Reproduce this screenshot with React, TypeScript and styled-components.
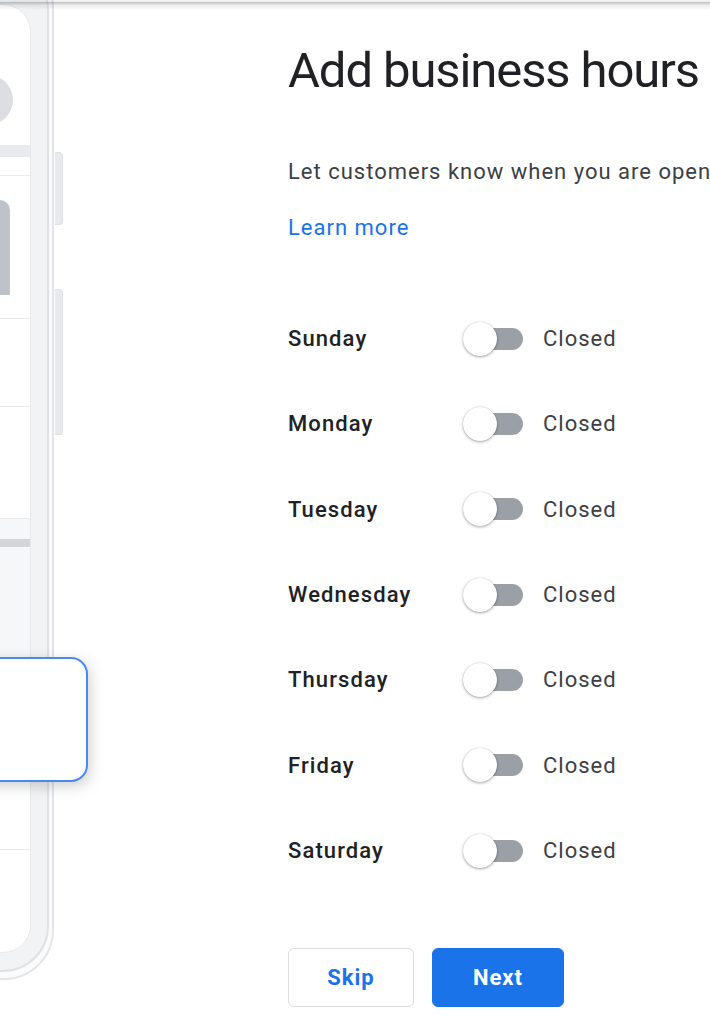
import React from "react";
import styled, { createGlobalStyle } from "styled-components";

const Global = createGlobalStyle`
  html, body { margin: 0; padding: 0; background: #fff; }
  body { font-family: Roboto, "Liberation Sans", Arial, sans-serif; }
  * { box-sizing: border-box; }
`;

const Page = styled.div`
  position: relative;
  display: flex;
  width: 710px;
  height: 1024px;
  overflow: hidden;
  background: #fff;
`;

const TopShadow = styled.div`
  position: absolute;
  left: 0;
  top: 0;
  width: 100%;
  height: 10px;
  background: linear-gradient(
    to bottom,
    rgba(0, 0, 0, 0.05) 0px,
    rgba(0, 0, 0, 0.06) 2px,
    rgba(0, 0, 0, 0.26) 2px,
    rgba(0, 0, 0, 0.2) 3px,
    rgba(0, 0, 0, 0.08) 5px,
    rgba(0, 0, 0, 0) 10px
  );
  z-index: 5;
`;

const PhoneColumn = styled.div`
  position: relative;
  flex: none;
  width: 288px;
  display: flex;
  align-items: flex-start;
`;

const PhoneOuter = styled.div`
  flex: none;
  margin-left: -332px;
  margin-top: -41px;
  border: 2px solid #e3e5e8;
  border-radius: 50px;
  padding: 3px 3px 6px 3px;
  background: #fbfbfc;
`;

const PhoneBezel = styled.div`
  border: 2px solid #dfe1e4;
  border-radius: 46px;
  background: #f1f3f4;
  padding: 38px 16px 17px 16px;
`;

const Screen = styled.div`
  width: 340px;
  height: 949px;
  background: #fff;
  border: 1px solid #e6e8eb;
  border-radius: 28px;
  overflow: hidden;
  display: flex;
  flex-direction: column;
`;

const AvatarRow = styled.div`
  flex: none;
  height: 140px;
  display: flex;
  justify-content: flex-end;
  padding: 70px 17px 0 0;
`;

const Avatar = styled.div`
  width: 50px;
  height: 50px;
  border-radius: 50%;
  background: #dcdee1;
`;

const GrayBar = styled.div<{ $h: number; $c: string }>`
  flex: none;
  height: ${(p) => p.$h}px;
  background: ${(p) => p.$c};
`;

const Section = styled.div<{ $h: number; $bg?: string; $line?: boolean }>`
  flex: none;
  height: ${(p) => p.$h}px;
  background: ${(p) => p.$bg || "#fff"};
  border-bottom: ${(p) => (p.$line ? "1px solid #e8eaed" : "none")};
  display: flex;
  flex-direction: column;
  align-items: flex-end;
`;

const TallBlock = styled.div`
  margin: 24px 20px 0 0;
  width: 60px;
  height: 95px;
  background: #bfc3c8;
  border-radius: 10px 10px 0 0;
`;

const Dot = styled.div`
  margin: 56px 30px 0 0;
  width: 2px;
  height: 2px;
  background: #5f6368;
  border-radius: 50%;
`;

const StripeBar = styled.div`
  margin-top: 20px;
  width: 100%;
  height: 8px;
  background: #d3d5d8;
`;

const SideRail = styled.div`
  flex: none;
  display: flex;
  flex-direction: column;
  gap: 64px;
  padding-top: 152px;
  margin-left: 1px;
`;

const SideButton = styled.div<{ $h: number }>`
  width: 8px;
  height: ${(p) => p.$h}px;
  background: #e8eaed;
  border: 1px solid #dfe1e4;
  border-left: none;
  border-radius: 0 4px 4px 0;
`;

const FloatCard = styled.div`
  position: absolute;
  left: -30px;
  top: 657px;
  width: 118px;
  height: 125px;
  background: #fff;
  border: 2px solid #4a89f0;
  border-radius: 17px;
  box-shadow: 2px 4px 14px rgba(60, 64, 67, 0.25);
  z-index: 2;
`;

const Content = styled.div`
  flex: 1;
  display: flex;
  flex-direction: column;
  padding-top: 40px;
  white-space: nowrap;
`;

const Title = styled.h1`
  margin: 0;
  font-family: Roboto, "Liberation Sans", sans-serif;
  font-weight: 400;
  font-size: 49px;
  line-height: 61px;
  color: #202124;
  letter-spacing: -1.1px;
`;

const Lead = styled.p`
  margin: 57px 0 0 0;
  font-size: 22px;
  line-height: 28px;
  letter-spacing: 1px;
  color: #3c4043;
`;

const LearnMore = styled.a`
  margin-top: 28px;
  font-size: 22px;
  line-height: 28px;
  letter-spacing: 1px;
  color: #1a73e8;
  text-decoration: none;
`;

const Days = styled.div`
  margin-top: 54px;
  display: flex;
  flex-direction: column;
`;

const DayRow = styled.div`
  height: 85.33px;
  display: flex;
  align-items: center;
`;

const DayName = styled.div`
  width: 175px;
  font-size: 22px;
  font-weight: 500;
  letter-spacing: 1.1px;
  color: #202124;
`;

const Track = styled.div`
  position: relative;
  width: 55px;
  height: 22px;
  margin-left: 5px;
  border-radius: 11px;
  background: #9aa0a6;
`;

const Knob = styled.div`
  position: absolute;
  left: -5px;
  top: -6px;
  width: 34px;
  height: 34px;
  border-radius: 50%;
  background: #fff;
  box-shadow: 0 1px 3px rgba(0, 0, 0, 0.35), 0 0 1px rgba(0, 0, 0, 0.2);
`;

const Status = styled.div`
  margin-left: 20px;
  font-size: 22px;
  letter-spacing: 1px;
  color: #3c4043;
`;

const Actions = styled.div`
  margin-top: 55px;
  display: flex;
  gap: 18px;
`;

const Button = styled.button<{ $primary?: boolean }>`
  height: 59px;
  width: ${(p) => (p.$primary ? 132 : 126)}px;
  border-radius: 6px;
  border: 1px solid ${(p) => (p.$primary ? "#1a73e8" : "#dadce0")};
  background: ${(p) => (p.$primary ? "#1a73e8" : "#fff")};
  color: ${(p) => (p.$primary ? "#fff" : "#1a73e8")};
  font-family: Roboto, "Liberation Sans", sans-serif;
  font-size: 22px;
  font-weight: 700;
  letter-spacing: 1px;
  padding: 0;
`;

const days = ["Sunday", "Monday", "Tuesday", "Wednesday", "Thursday", "Friday", "Saturday"];

export default function App() {
  return (
    <Page>
      <Global />
      <TopShadow />
      <PhoneColumn>
        <PhoneOuter>
          <PhoneBezel>
            <Screen>
              <AvatarRow>
                <Avatar />
              </AvatarRow>
              <GrayBar $h={12} $c="#e8eaed" />
              <Section $h={19} $line />
              <Section $h={143} $line>
                <TallBlock />
              </Section>
              <Section $h={88} $line />
              <Section $h={112} $line>
                <Dot />
              </Section>
              <Section $h={200} $bg="#f6f7f8">
                <StripeBar />
              </Section>
              <Section $h={131} $line />
              <Section $h={100} />
            </Screen>
          </PhoneBezel>
        </PhoneOuter>
        <SideRail>
          <SideButton $h={73} />
          <SideButton $h={146} />
        </SideRail>
        <FloatCard />
      </PhoneColumn>
      <Content>
        <Title>Add business hours</Title>
        <Lead>Let customers know when you are open</Lead>
        <LearnMore>Learn more</LearnMore>
        <Days>
          {days.map((d) => (
            <DayRow key={d}>
              <DayName>{d}</DayName>
              <Track>
                <Knob />
              </Track>
              <Status>Closed</Status>
            </DayRow>
          ))}
        </Days>
        <Actions>
          <Button>Skip</Button>
          <Button $primary>Next</Button>
        </Actions>
      </Content>
    </Page>
  );
}
